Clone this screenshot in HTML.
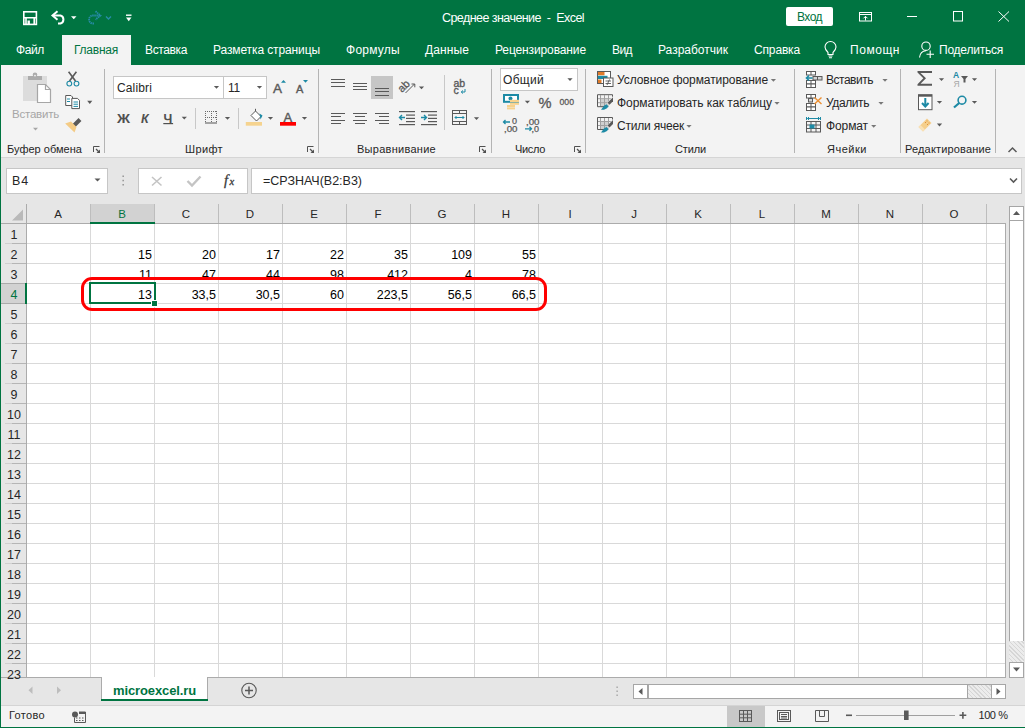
<!DOCTYPE html>
<html><head><meta charset="utf-8">
<style>
*{margin:0;padding:0;box-sizing:border-box}
html,body{width:1025px;height:728px;overflow:hidden;background:#fff;font-family:"Liberation Sans",sans-serif;position:relative}
.r{position:absolute}
.t{position:absolute;white-space:nowrap;line-height:normal}
svg text{font-family:"Liberation Sans",sans-serif}
</style></head><body>
<div class="r" style="left:0px;top:0px;width:1025px;height:65px;background:#007441"></div>
<div class="r" style="left:0px;top:65px;width:1025px;height:92px;background:#f3f3f3"></div>
<div class="r" style="left:0px;top:157px;width:1025px;height:1px;background:#d5d5d5"></div>
<div class="r" style="left:0px;top:158px;width:1025px;height:46px;background:#e6e6e6"></div>
<div class="r" style="left:0px;top:204px;width:1025px;height:474px;background:#e6e6e6"></div>
<div class="r" style="left:0px;top:677px;width:1025px;height:28px;background:#e6e6e6"></div>
<div class="r" style="left:0px;top:705px;width:1025px;height:23px;background:#f3f3f3"></div>
<div class="r" style="left:0px;top:705px;width:1025px;height:1px;background:#d4d4d4"></div>
<div class="t" id="t0" style="left:442px;top:11.08px;font-size:12.5px;color:#fff;font-weight:normal;letter-spacing:-0.556px;">Среднее значение&nbsp; -&nbsp; Excel</div>
<div class="r" style="left:786px;top:7px;width:47px;height:19px;background:#fff;border-radius:2px"></div>
<div class="t" id="t1" style="left:797px;top:9.94px;font-size:12px;color:#007441;font-weight:normal;letter-spacing:-0.539px;">Вход</div>
<div class="r" style="left:62px;top:35px;width:69px;height:30px;background:#f3f3f3"></div>
<div class="t" id="t2" style="left:16px;top:42.94px;font-size:12px;color:#fff;font-weight:normal;letter-spacing:-0.379px;">Файл</div>
<div class="t" id="t3" style="left:74px;top:42.94px;font-size:12px;color:#007441;font-weight:normal;letter-spacing:-0.241px;">Главная</div>
<div class="t" id="t4" style="left:145px;top:42.94px;font-size:12px;color:#fff;font-weight:normal;letter-spacing:-0.372px;">Вставка</div>
<div class="t" id="t5" style="left:213px;top:42.94px;font-size:12px;color:#fff;font-weight:normal;letter-spacing:-0.110px;">Разметка страницы</div>
<div class="t" id="t6" style="left:346px;top:42.94px;font-size:12px;color:#fff;font-weight:normal;letter-spacing:0.254px;">Формулы</div>
<div class="t" id="t7" style="left:425px;top:42.94px;font-size:12px;color:#fff;font-weight:normal;letter-spacing:0.107px;">Данные</div>
<div class="t" id="t8" style="left:495px;top:42.94px;font-size:12px;color:#fff;font-weight:normal;letter-spacing:-0.119px;">Рецензирование</div>
<div class="t" id="t9" style="left:612px;top:42.94px;font-size:12px;color:#fff;font-weight:normal;letter-spacing:-0.573px;">Вид</div>
<div class="t" id="t10" style="left:658px;top:42.94px;font-size:12px;color:#fff;font-weight:normal;letter-spacing:0.001px;">Разработчик</div>
<div class="t" id="t11" style="left:754px;top:42.94px;font-size:12px;color:#fff;font-weight:normal;letter-spacing:-0.154px;">Справка</div>
<div class="t" id="t12" style="left:850px;top:42.94px;font-size:12px;color:#fff;font-weight:normal;letter-spacing:0.544px;">Помощн</div>
<div class="t" id="t13" style="left:939px;top:42.94px;font-size:12px;color:#fff;font-weight:normal;letter-spacing:-0.228px;">Поделиться</div>
<div class="t" id="t14" style="left:7px;top:143.46px;font-size:11px;color:#262626;font-weight:normal;letter-spacing:0.021px;">Буфер обмена</div>
<div class="t" id="t15" style="left:185px;top:143.46px;font-size:11px;color:#262626;font-weight:normal;letter-spacing:0.359px;">Шрифт</div>
<div class="t" id="t16" style="left:357px;top:143.46px;font-size:11px;color:#262626;font-weight:normal;letter-spacing:0.273px;">Выравнивание</div>
<div class="t" id="t17" style="left:515px;top:143.46px;font-size:11px;color:#262626;font-weight:normal;letter-spacing:-0.328px;">Число</div>
<div class="t" id="t18" style="left:675px;top:143.46px;font-size:11px;color:#262626;font-weight:normal;letter-spacing:-0.141px;">Стили</div>
<div class="t" id="t19" style="left:827px;top:143.46px;font-size:11px;color:#262626;font-weight:normal;letter-spacing:0.518px;">Ячейки</div>
<div class="t" id="t20" style="left:905px;top:143.46px;font-size:11px;color:#262626;font-weight:normal;letter-spacing:0.157px;">Редактирование</div>
<div class="t" id="t21" style="left:12px;top:107.70px;font-size:11.5px;color:#a6a6a6;font-weight:normal;letter-spacing:-0.219px;">Вставить</div>
<div class="t" id="t22" style="left:617px;top:72.94px;font-size:12px;color:#262626;font-weight:normal;letter-spacing:-0.073px;">Условное форматирование</div>
<div class="t" id="t23" style="left:617px;top:95.94px;font-size:12px;color:#262626;font-weight:normal;letter-spacing:-0.046px;">Форматировать как таблицу</div>
<div class="t" id="t24" style="left:617px;top:118.94px;font-size:12px;color:#262626;font-weight:normal;letter-spacing:-0.206px;">Стили ячеек</div>
<div class="t" id="t25" style="left:826px;top:72.94px;font-size:12px;color:#262626;font-weight:normal;letter-spacing:-0.484px;">Вставить</div>
<div class="t" id="t26" style="left:826px;top:95.94px;font-size:12px;color:#262626;font-weight:normal;letter-spacing:-0.404px;">Удалить</div>
<div class="t" id="t27" style="left:826px;top:118.94px;font-size:12px;color:#262626;font-weight:normal;letter-spacing:-0.107px;">Формат</div>
<div class="r" style="left:113px;top:76px;width:111px;height:23px;background:#fff;border:1px solid #c6c6c6"></div>
<div class="r" style="left:223px;top:76px;width:44px;height:23px;background:#fff;border:1px solid #c6c6c6"></div>
<div class="t" id="t28" style="left:117px;top:80.94px;font-size:12px;color:#262626;font-weight:normal;letter-spacing:0.141px;">Calibri</div>
<div class="t" id="t29" style="left:228px;top:80.94px;font-size:12px;color:#262626;font-weight:normal;letter-spacing:-0.234px;">11</div>
<div class="r" style="left:500px;top:68px;width:78px;height:23px;background:#fff;border:1px solid #c6c6c6"></div>
<div class="t" id="t30" style="left:503px;top:72.94px;font-size:12px;color:#262626;font-weight:normal;letter-spacing:0.300px;">Общий</div>
<div class="r" style="left:104px;top:69px;width:1px;height:84px;background:#b4b4b4"></div>
<div class="r" style="left:318px;top:69px;width:1px;height:84px;background:#b4b4b4"></div>
<div class="r" style="left:491px;top:69px;width:1px;height:84px;background:#b4b4b4"></div>
<div class="r" style="left:585px;top:69px;width:1px;height:84px;background:#b4b4b4"></div>
<div class="r" style="left:794px;top:69px;width:1px;height:84px;background:#b4b4b4"></div>
<div class="r" style="left:900px;top:69px;width:1px;height:84px;background:#b4b4b4"></div>
<div class="r" style="left:995px;top:69px;width:1px;height:84px;background:#b4b4b4"></div>
<div class="r" style="left:444px;top:75px;width:1px;height:55px;background:#c8c8c8"></div>
<div class="r" style="left:195px;top:108px;width:1px;height:21px;background:#c8c8c8"></div>
<div class="r" style="left:238px;top:108px;width:1px;height:21px;background:#c8c8c8"></div>
<div class="r" style="left:371px;top:76px;width:22px;height:23px;background:#c6c6c6"></div>
<div class="r" style="left:6px;top:168px;width:102px;height:26px;background:#fff;border:1px solid #c6c6c6"></div>
<div class="t" id="t31" style="left:12px;top:174.48px;font-size:12.5px;color:#262626;font-weight:normal;letter-spacing:0.852px;">B4</div>
<div class="r" style="left:138px;top:168px;width:110px;height:26px;background:#fff;border:1px solid #c6c6c6"></div>
<div class="r" style="left:251px;top:168px;width:771px;height:26px;background:#fff;border:1px solid #c6c6c6"></div>
<div class="t" id="t32" style="left:263px;top:174.48px;font-size:12.5px;color:#262626;font-weight:normal;letter-spacing:-0.003px;">=СРЗНАЧ(B2:B3)</div>
<div class="r" style="left:26px;top:223px;width:979px;height:454px;background:#fff"></div>
<div class="r" style="left:90px;top:204px;width:64px;height:19px;background:#d2d2d2"></div>
<div class="r" style="left:1px;top:283px;width:25px;height:20px;background:#d2d2d2"></div>
<div class="r" style="left:90px;top:223px;width:1px;height:454px;background:#d9d9d9"></div><div class="r" style="left:154px;top:223px;width:1px;height:454px;background:#d9d9d9"></div><div class="r" style="left:218px;top:223px;width:1px;height:454px;background:#d9d9d9"></div><div class="r" style="left:282px;top:223px;width:1px;height:454px;background:#d9d9d9"></div><div class="r" style="left:346px;top:223px;width:1px;height:454px;background:#d9d9d9"></div><div class="r" style="left:410px;top:223px;width:1px;height:454px;background:#d9d9d9"></div><div class="r" style="left:474px;top:223px;width:1px;height:454px;background:#d9d9d9"></div><div class="r" style="left:538px;top:223px;width:1px;height:454px;background:#d9d9d9"></div><div class="r" style="left:602px;top:223px;width:1px;height:454px;background:#d9d9d9"></div><div class="r" style="left:666px;top:223px;width:1px;height:454px;background:#d9d9d9"></div><div class="r" style="left:730px;top:223px;width:1px;height:454px;background:#d9d9d9"></div><div class="r" style="left:794px;top:223px;width:1px;height:454px;background:#d9d9d9"></div><div class="r" style="left:858px;top:223px;width:1px;height:454px;background:#d9d9d9"></div><div class="r" style="left:922px;top:223px;width:1px;height:454px;background:#d9d9d9"></div><div class="r" style="left:986px;top:223px;width:1px;height:454px;background:#d9d9d9"></div><div class="r" style="left:26px;top:243px;width:979px;height:1px;background:#d9d9d9"></div><div class="r" style="left:26px;top:263px;width:979px;height:1px;background:#d9d9d9"></div><div class="r" style="left:26px;top:283px;width:979px;height:1px;background:#d9d9d9"></div><div class="r" style="left:26px;top:303px;width:979px;height:1px;background:#d9d9d9"></div><div class="r" style="left:26px;top:323px;width:979px;height:1px;background:#d9d9d9"></div><div class="r" style="left:26px;top:343px;width:979px;height:1px;background:#d9d9d9"></div><div class="r" style="left:26px;top:363px;width:979px;height:1px;background:#d9d9d9"></div><div class="r" style="left:26px;top:383px;width:979px;height:1px;background:#d9d9d9"></div><div class="r" style="left:26px;top:403px;width:979px;height:1px;background:#d9d9d9"></div><div class="r" style="left:26px;top:423px;width:979px;height:1px;background:#d9d9d9"></div><div class="r" style="left:26px;top:443px;width:979px;height:1px;background:#d9d9d9"></div><div class="r" style="left:26px;top:463px;width:979px;height:1px;background:#d9d9d9"></div><div class="r" style="left:26px;top:483px;width:979px;height:1px;background:#d9d9d9"></div><div class="r" style="left:26px;top:503px;width:979px;height:1px;background:#d9d9d9"></div><div class="r" style="left:26px;top:523px;width:979px;height:1px;background:#d9d9d9"></div><div class="r" style="left:26px;top:543px;width:979px;height:1px;background:#d9d9d9"></div><div class="r" style="left:26px;top:563px;width:979px;height:1px;background:#d9d9d9"></div><div class="r" style="left:26px;top:583px;width:979px;height:1px;background:#d9d9d9"></div><div class="r" style="left:26px;top:603px;width:979px;height:1px;background:#d9d9d9"></div><div class="r" style="left:26px;top:623px;width:979px;height:1px;background:#d9d9d9"></div><div class="r" style="left:26px;top:643px;width:979px;height:1px;background:#d9d9d9"></div><div class="r" style="left:26px;top:663px;width:979px;height:1px;background:#d9d9d9"></div>
<div class="r" style="left:26px;top:204px;width:1px;height:473px;background:#ababab"></div>
<div class="r" style="left:90px;top:204px;width:1px;height:19px;background:#bdbdbd"></div>
<div class="r" style="left:154px;top:204px;width:1px;height:19px;background:#bdbdbd"></div>
<div class="r" style="left:218px;top:204px;width:1px;height:19px;background:#bdbdbd"></div>
<div class="r" style="left:282px;top:204px;width:1px;height:19px;background:#bdbdbd"></div>
<div class="r" style="left:346px;top:204px;width:1px;height:19px;background:#bdbdbd"></div>
<div class="r" style="left:410px;top:204px;width:1px;height:19px;background:#bdbdbd"></div>
<div class="r" style="left:474px;top:204px;width:1px;height:19px;background:#bdbdbd"></div>
<div class="r" style="left:538px;top:204px;width:1px;height:19px;background:#bdbdbd"></div>
<div class="r" style="left:602px;top:204px;width:1px;height:19px;background:#bdbdbd"></div>
<div class="r" style="left:666px;top:204px;width:1px;height:19px;background:#bdbdbd"></div>
<div class="r" style="left:730px;top:204px;width:1px;height:19px;background:#bdbdbd"></div>
<div class="r" style="left:794px;top:204px;width:1px;height:19px;background:#bdbdbd"></div>
<div class="r" style="left:858px;top:204px;width:1px;height:19px;background:#bdbdbd"></div>
<div class="r" style="left:922px;top:204px;width:1px;height:19px;background:#bdbdbd"></div>
<div class="r" style="left:986px;top:204px;width:1px;height:19px;background:#bdbdbd"></div>
<div class="r" style="left:1px;top:223px;width:1005px;height:1px;background:#ababab"></div>
<div class="r" style="left:12px;top:243px;width:14px;height:1px;background:#b5b5b5"></div>
<div class="r" style="left:5px;top:243px;width:7px;height:1px;background:#d0d0d0"></div>
<div class="r" style="left:12px;top:263px;width:14px;height:1px;background:#b5b5b5"></div>
<div class="r" style="left:5px;top:263px;width:7px;height:1px;background:#d0d0d0"></div>
<div class="r" style="left:12px;top:283px;width:14px;height:1px;background:#b5b5b5"></div>
<div class="r" style="left:5px;top:283px;width:7px;height:1px;background:#d0d0d0"></div>
<div class="r" style="left:12px;top:303px;width:14px;height:1px;background:#b5b5b5"></div>
<div class="r" style="left:5px;top:303px;width:7px;height:1px;background:#d0d0d0"></div>
<div class="r" style="left:12px;top:323px;width:14px;height:1px;background:#b5b5b5"></div>
<div class="r" style="left:5px;top:323px;width:7px;height:1px;background:#d0d0d0"></div>
<div class="r" style="left:12px;top:343px;width:14px;height:1px;background:#b5b5b5"></div>
<div class="r" style="left:5px;top:343px;width:7px;height:1px;background:#d0d0d0"></div>
<div class="r" style="left:12px;top:363px;width:14px;height:1px;background:#b5b5b5"></div>
<div class="r" style="left:5px;top:363px;width:7px;height:1px;background:#d0d0d0"></div>
<div class="r" style="left:12px;top:383px;width:14px;height:1px;background:#b5b5b5"></div>
<div class="r" style="left:5px;top:383px;width:7px;height:1px;background:#d0d0d0"></div>
<div class="r" style="left:12px;top:403px;width:14px;height:1px;background:#b5b5b5"></div>
<div class="r" style="left:5px;top:403px;width:7px;height:1px;background:#d0d0d0"></div>
<div class="r" style="left:12px;top:423px;width:14px;height:1px;background:#b5b5b5"></div>
<div class="r" style="left:5px;top:423px;width:7px;height:1px;background:#d0d0d0"></div>
<div class="r" style="left:12px;top:443px;width:14px;height:1px;background:#b5b5b5"></div>
<div class="r" style="left:5px;top:443px;width:7px;height:1px;background:#d0d0d0"></div>
<div class="r" style="left:12px;top:463px;width:14px;height:1px;background:#b5b5b5"></div>
<div class="r" style="left:5px;top:463px;width:7px;height:1px;background:#d0d0d0"></div>
<div class="r" style="left:12px;top:483px;width:14px;height:1px;background:#b5b5b5"></div>
<div class="r" style="left:5px;top:483px;width:7px;height:1px;background:#d0d0d0"></div>
<div class="r" style="left:12px;top:503px;width:14px;height:1px;background:#b5b5b5"></div>
<div class="r" style="left:5px;top:503px;width:7px;height:1px;background:#d0d0d0"></div>
<div class="r" style="left:12px;top:523px;width:14px;height:1px;background:#b5b5b5"></div>
<div class="r" style="left:5px;top:523px;width:7px;height:1px;background:#d0d0d0"></div>
<div class="r" style="left:12px;top:543px;width:14px;height:1px;background:#b5b5b5"></div>
<div class="r" style="left:5px;top:543px;width:7px;height:1px;background:#d0d0d0"></div>
<div class="r" style="left:12px;top:563px;width:14px;height:1px;background:#b5b5b5"></div>
<div class="r" style="left:5px;top:563px;width:7px;height:1px;background:#d0d0d0"></div>
<div class="r" style="left:12px;top:583px;width:14px;height:1px;background:#b5b5b5"></div>
<div class="r" style="left:5px;top:583px;width:7px;height:1px;background:#d0d0d0"></div>
<div class="r" style="left:12px;top:603px;width:14px;height:1px;background:#b5b5b5"></div>
<div class="r" style="left:5px;top:603px;width:7px;height:1px;background:#d0d0d0"></div>
<div class="r" style="left:12px;top:623px;width:14px;height:1px;background:#b5b5b5"></div>
<div class="r" style="left:5px;top:623px;width:7px;height:1px;background:#d0d0d0"></div>
<div class="r" style="left:12px;top:643px;width:14px;height:1px;background:#b5b5b5"></div>
<div class="r" style="left:5px;top:643px;width:7px;height:1px;background:#d0d0d0"></div>
<div class="r" style="left:12px;top:663px;width:14px;height:1px;background:#b5b5b5"></div>
<div class="r" style="left:5px;top:663px;width:7px;height:1px;background:#d0d0d0"></div>
<div class="r" style="left:90px;top:222px;width:65px;height:2px;background:#007441"></div>
<div class="r" style="left:1px;top:283px;width:25px;height:1px;background:#ababab"></div>
<div class="r" style="left:1px;top:303px;width:25px;height:1px;background:#ababab"></div>
<div class="r" style="left:25px;top:283px;width:2px;height:21px;background:#007441"></div>
<div class="r" style="left:1005px;top:223px;width:1px;height:455px;background:#ababab"></div>
<div class="r" style="left:0px;top:677px;width:1006px;height:1px;background:#ababab"></div>
<div class="t" style="left:48px;width:20px;text-align:center;top:208.42px;font-size:11.5px;color:#262626">A</div>
<div class="t" style="left:112px;width:20px;text-align:center;top:208.42px;font-size:11.5px;color:#007441">B</div>
<div class="t" style="left:176px;width:20px;text-align:center;top:208.42px;font-size:11.5px;color:#262626">C</div>
<div class="t" style="left:240px;width:20px;text-align:center;top:208.42px;font-size:11.5px;color:#262626">D</div>
<div class="t" style="left:304px;width:20px;text-align:center;top:208.42px;font-size:11.5px;color:#262626">E</div>
<div class="t" style="left:368px;width:20px;text-align:center;top:208.42px;font-size:11.5px;color:#262626">F</div>
<div class="t" style="left:432px;width:20px;text-align:center;top:208.42px;font-size:11.5px;color:#262626">G</div>
<div class="t" style="left:496px;width:20px;text-align:center;top:208.42px;font-size:11.5px;color:#262626">H</div>
<div class="t" style="left:560px;width:20px;text-align:center;top:208.42px;font-size:11.5px;color:#262626">I</div>
<div class="t" style="left:624px;width:20px;text-align:center;top:208.42px;font-size:11.5px;color:#262626">J</div>
<div class="t" style="left:688px;width:20px;text-align:center;top:208.42px;font-size:11.5px;color:#262626">K</div>
<div class="t" style="left:752px;width:20px;text-align:center;top:208.42px;font-size:11.5px;color:#262626">L</div>
<div class="t" style="left:816px;width:20px;text-align:center;top:208.42px;font-size:11.5px;color:#262626">M</div>
<div class="t" style="left:880px;width:20px;text-align:center;top:208.42px;font-size:11.5px;color:#262626">N</div>
<div class="t" style="left:944px;width:20px;text-align:center;top:208.42px;font-size:11.5px;color:#262626">O</div>
<div class="t" style="left:1.5px;width:25px;text-align:center;top:227.50px;font-size:12.5px;color:#262626">1</div>
<div class="t" style="left:1.5px;width:25px;text-align:center;top:247.50px;font-size:12.5px;color:#262626">2</div>
<div class="t" style="left:1.5px;width:25px;text-align:center;top:267.50px;font-size:12.5px;color:#262626">3</div>
<div class="t" style="left:1.5px;width:25px;text-align:center;top:287.50px;font-size:12.5px;color:#007441">4</div>
<div class="t" style="left:1.5px;width:25px;text-align:center;top:307.50px;font-size:12.5px;color:#262626">5</div>
<div class="t" style="left:1.5px;width:25px;text-align:center;top:327.50px;font-size:12.5px;color:#262626">6</div>
<div class="t" style="left:1.5px;width:25px;text-align:center;top:347.50px;font-size:12.5px;color:#262626">7</div>
<div class="t" style="left:1.5px;width:25px;text-align:center;top:367.50px;font-size:12.5px;color:#262626">8</div>
<div class="t" style="left:1.5px;width:25px;text-align:center;top:387.50px;font-size:12.5px;color:#262626">9</div>
<div class="t" style="left:1.5px;width:25px;text-align:center;top:407.50px;font-size:12.5px;color:#262626">10</div>
<div class="t" style="left:1.5px;width:25px;text-align:center;top:427.50px;font-size:12.5px;color:#262626">11</div>
<div class="t" style="left:1.5px;width:25px;text-align:center;top:447.50px;font-size:12.5px;color:#262626">12</div>
<div class="t" style="left:1.5px;width:25px;text-align:center;top:467.50px;font-size:12.5px;color:#262626">13</div>
<div class="t" style="left:1.5px;width:25px;text-align:center;top:487.50px;font-size:12.5px;color:#262626">14</div>
<div class="t" style="left:1.5px;width:25px;text-align:center;top:507.50px;font-size:12.5px;color:#262626">15</div>
<div class="t" style="left:1.5px;width:25px;text-align:center;top:527.50px;font-size:12.5px;color:#262626">16</div>
<div class="t" style="left:1.5px;width:25px;text-align:center;top:547.50px;font-size:12.5px;color:#262626">17</div>
<div class="t" style="left:1.5px;width:25px;text-align:center;top:567.50px;font-size:12.5px;color:#262626">18</div>
<div class="t" style="left:1.5px;width:25px;text-align:center;top:587.50px;font-size:12.5px;color:#262626">19</div>
<div class="t" style="left:1.5px;width:25px;text-align:center;top:607.50px;font-size:12.5px;color:#262626">20</div>
<div class="t" style="left:1.5px;width:25px;text-align:center;top:627.50px;font-size:12.5px;color:#262626">21</div>
<div class="t" style="left:1.5px;width:25px;text-align:center;top:647.50px;font-size:12.5px;color:#262626">22</div>
<div class="t" style="left:1.5px;width:25px;text-align:center;top:667.50px;font-size:12.5px;color:#262626">23</div>
<div class="r" style="left:0;top:0;width:1005px;height:677px;overflow:hidden">
<div class="t" style="left:92px;width:60px;text-align:right;top:247.50px;font-size:12.5px;color:#000">15</div>
<div class="t" style="left:156px;width:60px;text-align:right;top:247.50px;font-size:12.5px;color:#000">20</div>
<div class="t" style="left:220px;width:60px;text-align:right;top:247.50px;font-size:12.5px;color:#000">17</div>
<div class="t" style="left:284px;width:60px;text-align:right;top:247.50px;font-size:12.5px;color:#000">22</div>
<div class="t" style="left:348px;width:60px;text-align:right;top:247.50px;font-size:12.5px;color:#000">35</div>
<div class="t" style="left:412px;width:60px;text-align:right;top:247.50px;font-size:12.5px;color:#000">109</div>
<div class="t" style="left:476px;width:60px;text-align:right;top:247.50px;font-size:12.5px;color:#000">55</div>
<div class="t" style="left:92px;width:60px;text-align:right;top:267.50px;font-size:12.5px;color:#000">11</div>
<div class="t" style="left:156px;width:60px;text-align:right;top:267.50px;font-size:12.5px;color:#000">47</div>
<div class="t" style="left:220px;width:60px;text-align:right;top:267.50px;font-size:12.5px;color:#000">44</div>
<div class="t" style="left:284px;width:60px;text-align:right;top:267.50px;font-size:12.5px;color:#000">98</div>
<div class="t" style="left:348px;width:60px;text-align:right;top:267.50px;font-size:12.5px;color:#000">412</div>
<div class="t" style="left:412px;width:60px;text-align:right;top:267.50px;font-size:12.5px;color:#000">4</div>
<div class="t" style="left:476px;width:60px;text-align:right;top:267.50px;font-size:12.5px;color:#000">78</div>
<div class="t" style="left:92px;width:60px;text-align:right;top:287.50px;font-size:12.5px;color:#000">13</div>
<div class="t" style="left:156px;width:60px;text-align:right;top:287.50px;font-size:12.5px;color:#000">33,5</div>
<div class="t" style="left:220px;width:60px;text-align:right;top:287.50px;font-size:12.5px;color:#000">30,5</div>
<div class="t" style="left:284px;width:60px;text-align:right;top:287.50px;font-size:12.5px;color:#000">60</div>
<div class="t" style="left:348px;width:60px;text-align:right;top:287.50px;font-size:12.5px;color:#000">223,5</div>
<div class="t" style="left:412px;width:60px;text-align:right;top:287.50px;font-size:12.5px;color:#000">56,5</div>
<div class="t" style="left:476px;width:60px;text-align:right;top:287.50px;font-size:12.5px;color:#000">66,5</div>
</div>
<div class="r" style="left:89px;top:282px;width:67px;height:22px;border:2px solid #007441"></div>
<div class="r" style="left:151px;top:300px;width:7px;height:7px;background:#007441;border:1px solid #fff"></div>
<div class="r" style="left:81px;top:277px;width:466px;height:34px;border:3px solid #f00;border-radius:11px"></div>
<div class="r" style="left:1009px;top:206px;width:15px;height:472px;background:#fff;border:1px solid #a6a6a6"></div>
<div class="r" style="left:1009px;top:206px;width:15px;height:15px;background:#fff;border:1px solid #a6a6a6"></div>
<div class="r" style="left:1009px;top:641px;width:15px;height:22px;background:repeating-linear-gradient(45deg,#d6d6d6 0 1px,#ececec 1px 3px)"></div>
<div class="r" style="left:1009px;top:662px;width:15px;height:16px;background:#fff;border:1px solid #a6a6a6"></div>
<div class="r" style="left:633px;top:684px;width:373px;height:15px;background:#fff;border:1px solid #a6a6a6"></div>
<div class="r" style="left:633px;top:684px;width:15px;height:15px;background:#fff;border:1px solid #a6a6a6"></div>
<div class="r" style="left:647px;top:684px;width:321px;height:15px;background:#fff;border:1px solid #a6a6a6;border-left:2px solid #a6a6a6"></div>
<div class="r" style="left:968px;top:685px;width:23px;height:13px;background:repeating-linear-gradient(45deg,#d6d6d6 0 1px,#ececec 1px 3px)"></div>
<div class="r" style="left:991px;top:684px;width:15px;height:15px;background:#fff;border:1px solid #a6a6a6"></div>
<div class="r" style="left:101px;top:677px;width:107px;height:24px;background:#fff;border-left:1px solid #ababab;border-right:1px solid #ababab"></div>
<div class="r" style="left:101px;top:699px;width:107px;height:2px;background:#007441"></div>
<div class="t" id="t33" style="left:113px;top:683.02px;font-size:13px;color:#007441;font-weight:bold;letter-spacing:-0.119px;">microexcel.ru</div>
<div class="t" id="t34" style="left:9px;top:709.06px;font-size:11px;color:#262626;font-weight:normal;letter-spacing:0.336px;">Готово</div>
<div class="t" id="t35" style="left:978.5px;top:708.86px;font-size:11px;color:#262626;font-weight:normal;letter-spacing:-0.440px;">100&nbsp;%</div>
<div class="r" style="left:727px;top:706px;width:38px;height:21px;background:#c8c8c8"></div>
<div class="r" style="left:0px;top:65px;width:1px;height:663px;background:#007441"></div>
<div class="r" style="left:0px;top:727px;width:1025px;height:1px;background:#007441"></div>
<svg class="r" style="left:0;top:0" width="1025" height="728" viewBox="0 0 1025 728"><g fill="none" stroke="#fff" stroke-width="1.6"><rect x="23.8" y="11.8" width="12.6" height="12.6"/><path d="M24 17.8H36.2M26 17.8V24.5M34.2 17.8V24.5"/></g><rect x="27.5" y="20.5" width="2.4" height="3.5" fill="#fff"/><path d="M53.5 15.5H60.5A4.2 4.2 0 0 1 60.5 23.5H58" fill="none" stroke="#fff" stroke-width="2"/><path d="M57.5 11.3L52.5 15.5L57.5 19.7" fill="none" stroke="#fff" stroke-width="2"/><path d="M71 16.3H76.5L73.75 19.2Z" fill="#fff"/><g stroke="#2e90b8" stroke-width="1.8" fill="none" stroke-dasharray="1.5 0.6" opacity="0.85"><path d="M100 15.5H92A4.2 4.2 0 0 0 92 23.5H94"/><path d="M95.5 11.3L100.5 15.5L95.5 19.7"/></g><path d="M106 16.5L108.5 19L111 16.5" stroke="#2e90b8" stroke-width="1.4" fill="none" opacity="0.85"/><rect x="126" y="14.5" width="5.5" height="1.4" fill="#fff"/><path d="M126 17.6H131.5L128.75 21.2Z" fill="#fff"/><g fill="none" stroke="#fff" stroke-width="1"><rect x="859.5" y="12.5" width="12" height="8.5"/><path d="M859.5 14.5H871.5M865.5 20.5V16.5M863.5 18.3L865.5 16.3L867.5 18.3"/><path d="M907 16.5H917"/><rect x="953.5" y="11.5" width="9" height="9.5"/><path d="M998.5 11.5L1009 21.5M1009 11.5L998.5 21.5"/></g><g fill="none" stroke="#fff" stroke-width="1.1"><path d="M828 54.5V52.5C826 50.5 825 48.5 825 47A5.5 5.5 0 0 1 836 47C836 48.5 835 50.5 833 52.5V54.5Z"/><path d="M828.5 56H832.5M829 57.8H832"/></g><g fill="none" stroke="#fff" stroke-width="1.1"><circle cx="926" cy="46.2" r="4.2"/><path d="M919.5 57.5C920 53.5 922.5 51 926 50.8"/><path d="M926.5 54.2H934M930.2 50.5V58"/></g><rect x="23" y="76" width="24" height="25" fill="#dcdcdc"/><rect x="28" y="76" width="14" height="4" fill="#ababab"/><circle cx="35" cy="74.8" r="2.3" fill="#ababab"/><circle cx="35" cy="75.6" r="0.9" fill="#f3f3f3"/><path d="M37.5 84.5H45.5L50.5 89.5V102.5H37.5Z" fill="#fff" stroke="#a6a6a6" stroke-width="1.2"/><path d="M45.5 84.5V89.5H50.5" fill="none" stroke="#a6a6a6" stroke-width="1.2"/><path d="M33 127.8H38L35.5 130.6Z" fill="#a6a6a6"/><path d="M68.6 71.7L75.5 81M76.4 71.7L69.5 81" stroke="#595959" stroke-width="1.6"/><circle cx="69.3" cy="83.6" r="2.4" fill="none" stroke="#1d8aa5" stroke-width="1.1"/><circle cx="76.5" cy="83.6" r="2.4" fill="none" stroke="#1d8aa5" stroke-width="1.1"/><path d="M65.7 95.5H71L72.5 97V105.5H65.7Z" fill="#fff" stroke="#595959" stroke-width="1"/><path d="M71.8 98.4H77.5L79.5 100.4V108.6H71.8Z" fill="#fff" stroke="#595959" stroke-width="1"/><path d="M67 99H70M67 101.5H70M73.5 102H78M73.5 104.2H78M73.5 106.4H78" stroke="#1d8aa5" stroke-width="1"/><path d="M87.2 100.7H92.3L89.75 104Z" fill="#595959"/><path d="M80 119.5L72.5 127" stroke="#595959" stroke-width="4"/><path d="M65.2 123.5L71 121.5L76.5 127L74.5 132.5Z" fill="#f4cb85"/><path d="M93.5 152V146.5H99.5" fill="none" stroke="#505050" stroke-width="1"/><path d="M100.0 149.5V153H96.5Z" fill="#505050"/><path d="M96.0 149L99.0 152" stroke="#505050" stroke-width="1.2"/><path d="M213.9 86H219.1L216.5 88.8Z" fill="#595959"/><path d="M256.9 86H262.1L259.5 88.8Z" fill="#595959"/><text x="273" y="93" font-family="Liberation Sans" font-size="13.5" fill="#595959" stroke="#595959" stroke-width="0.4">A</text><path d="M281 82.7H286L283.5 80Z" fill="#1d8aa5"/><text x="296" y="93" font-family="Liberation Sans" font-size="11" fill="#595959" stroke="#595959" stroke-width="0.4">A</text><path d="M303 80H308L305.5 82.7Z" fill="#1d8aa5"/><text x="117" y="122.5" font-family="Liberation Sans" font-weight="bold" font-size="12.5" fill="#505050" textLength="13" lengthAdjust="spacingAndGlyphs">Ж</text><text x="141" y="122.5" font-family="Liberation Sans" font-weight="bold" font-style="italic" font-size="12.5" fill="#505050">К</text><text x="163.5" y="122.5" font-family="Liberation Sans" font-weight="bold" font-size="12.5" fill="#505050">Ч</text><rect x="163.3" y="123" width="9.8" height="1.2" fill="#505050"/><path d="M181.70000000000002 116.8H186.9L184.3 119.6Z" fill="#595959"/><g fill="#6a6a6a"><rect x="205" y="111" width="1" height="1"/><rect x="205" y="117" width="1" height="1"/><rect x="207" y="111" width="1" height="1"/><rect x="207" y="117" width="1" height="1"/><rect x="209" y="111" width="1" height="1"/><rect x="209" y="117" width="1" height="1"/><rect x="211" y="111" width="1" height="1"/><rect x="211" y="117" width="1" height="1"/><rect x="213" y="111" width="1" height="1"/><rect x="213" y="117" width="1" height="1"/><rect x="215" y="111" width="1" height="1"/><rect x="215" y="117" width="1" height="1"/><rect x="205" y="111" width="1" height="1"/><rect x="211" y="111" width="1" height="1"/><rect x="216" y="111" width="1" height="1"/><rect x="205" y="113" width="1" height="1"/><rect x="211" y="113" width="1" height="1"/><rect x="216" y="113" width="1" height="1"/><rect x="205" y="115" width="1" height="1"/><rect x="211" y="115" width="1" height="1"/><rect x="216" y="115" width="1" height="1"/><rect x="205" y="117" width="1" height="1"/><rect x="211" y="117" width="1" height="1"/><rect x="216" y="117" width="1" height="1"/><rect x="205" y="119" width="1" height="1"/><rect x="211" y="119" width="1" height="1"/><rect x="216" y="119" width="1" height="1"/><rect x="205" y="121" width="1" height="1"/><rect x="211" y="121" width="1" height="1"/><rect x="216" y="121" width="1" height="1"/></g><rect x="205" y="122.5" width="12" height="1" fill="#555"/><path d="M224.9 117H230.1L227.5 119.8Z" fill="#595959"/><path d="M251 115.5L255.5 111L261 116.5L256.5 121Z" fill="#fff" stroke="#595959" stroke-width="1"/><path d="M255.5 111V108.8" stroke="#595959"/><path d="M259.5 113.5L262.5 115.5L260.5 119.5Z" fill="#1d8aa5"/><rect x="245.8" y="122" width="16.2" height="3.7" fill="#f5d38f"/><path d="M267.9 117H273.1L270.5 119.8Z" fill="#595959"/><text x="283.5" y="121.5" font-family="Liberation Sans" font-size="13" fill="#595959" stroke="#595959" stroke-width="0.4">A</text><rect x="280" y="122" width="16" height="3.7" fill="#f00"/><path d="M301.9 117H307.1L304.5 119.8Z" fill="#595959"/><path d="M307.5 152V146.5H313.5" fill="none" stroke="#505050" stroke-width="1"/><path d="M314.0 149.5V153H310.5Z" fill="#505050"/><path d="M310.0 149L313.0 152" stroke="#505050" stroke-width="1.2"/><rect x="331" y="79" width="14" height="1" fill="#595959"/><rect x="331" y="82" width="14" height="1" fill="#595959"/><rect x="331" y="86" width="14" height="1" fill="#595959"/><rect x="353" y="83" width="14" height="1" fill="#595959"/><rect x="353" y="86" width="14" height="1" fill="#595959"/><rect x="353" y="89" width="14" height="1" fill="#595959"/><rect x="375" y="88" width="14" height="1" fill="#595959"/><rect x="375" y="91" width="14" height="1" fill="#595959"/><rect x="375" y="95" width="14" height="1" fill="#595959"/><text x="0" y="0" transform="translate(402,93) rotate(-45)" font-family="Liberation Sans" font-size="11" fill="#595959" stroke="#595959" stroke-width="0.3">ab</text><path d="M405.5 93L414.5 84M411.5 84H414.8V87.3" fill="none" stroke="#595959" stroke-width="1"/><path d="M418.9 86.4H424.1L421.5 89.2Z" fill="#595959"/><text x="453.5" y="87" font-family="Liberation Sans" font-size="10.5" fill="#595959" stroke="#595959" stroke-width="0.35">ab</text><text x="453.5" y="94" font-family="Liberation Sans" font-size="10.5" fill="#595959" stroke="#595959" stroke-width="0.35">c</text><path d="M465 89V92H461.5M463 90.5L461.2 92L463 93.5" fill="none" stroke="#1d8aa5" stroke-width="1"/><rect x="331" y="113" width="14" height="1" fill="#595959"/><rect x="353.0" y="113" width="14.0" height="1" fill="#595959"/><rect x="375" y="113" width="14" height="1" fill="#595959"/><rect x="331" y="116" width="10" height="1" fill="#595959"/><rect x="355.0" y="116" width="10.0" height="1" fill="#595959"/><rect x="379" y="116" width="10" height="1" fill="#595959"/><rect x="331" y="120" width="14" height="1" fill="#595959"/><rect x="353.0" y="120" width="14.0" height="1" fill="#595959"/><rect x="375" y="120" width="14" height="1" fill="#595959"/><rect x="331" y="123" width="10" height="1" fill="#595959"/><rect x="355.0" y="123" width="10.0" height="1" fill="#595959"/><rect x="379" y="123" width="10" height="1" fill="#595959"/><g fill="#595959"><rect x="399" y="111" width="16" height="1.2"/><rect x="406" y="114.5" width="9" height="1.2"/><rect x="406" y="117.8" width="9" height="1.2"/><rect x="406" y="121" width="9" height="1.2"/><rect x="399" y="124" width="16" height="1.2"/><rect x="421" y="111" width="16" height="1.2"/><rect x="428" y="114.5" width="9" height="1.2"/><rect x="428" y="117.8" width="9" height="1.2"/><rect x="428" y="121" width="9" height="1.2"/><rect x="421" y="124" width="16" height="1.2"/></g><path d="M399.5 117.5H405M402 115L399.5 117.5L402 120" fill="none" stroke="#1d8aa5" stroke-width="1.4"/><path d="M421 117.5H426.5M424 115L426.5 117.5L424 120" fill="none" stroke="#1d8aa5" stroke-width="1.4"/><g fill="none" stroke="#595959" stroke-width="1"><rect x="452.5" y="110.5" width="14" height="14"/><path d="M452.5 113.5H466.5M452.5 121.5H466.5M459.5 110.5V113.5M459.5 121.5V124.5"/></g><path d="M455 117.5H464M456.5 116L455 117.5L456.5 119M462.5 116L464 117.5L462.5 119" fill="none" stroke="#1d8aa5" stroke-width="1"/><path d="M473.9 117.3H479.1L476.5 120.1Z" fill="#595959"/><path d="M479.5 152V146.5H485.5" fill="none" stroke="#505050" stroke-width="1"/><path d="M486.0 149.5V153H482.5Z" fill="#505050"/><path d="M482.0 149L485.0 152" stroke="#505050" stroke-width="1.2"/><path d="M567.4 78.3H572.6L570 81.1Z" fill="#595959"/><rect x="503" y="94" width="16" height="8.8" fill="#1d8aa5"/><rect x="505" y="96" width="12" height="4.8" fill="#fff"/><circle cx="510.5" cy="98.4" r="2" fill="#1d8aa5"/><g fill="#f7d28c"><rect x="510" y="99.8" width="9" height="2.2"/><rect x="510" y="102.6" width="9" height="2.2"/><rect x="507" y="105" width="8" height="2"/><rect x="507" y="107.4" width="8" height="2"/></g><path d="M524.8 100.8H530.0L527.4 103.6Z" fill="#595959"/><text x="538.5" y="108" font-family="Liberation Sans" font-size="15" fill="#595959" stroke="#595959" stroke-width="0.35" textLength="13" lengthAdjust="spacingAndGlyphs">%</text><text x="559.5" y="104.8" font-family="Liberation Sans" font-size="9.5" fill="#595959" stroke="#595959" stroke-width="0.3" textLength="14.5" lengthAdjust="spacingAndGlyphs">000</text><text x="512" y="123.5" font-family="Liberation Sans" font-size="9" fill="#595959" stroke="#595959" stroke-width="0.25">0</text><text x="504" y="132" font-family="Liberation Sans" font-size="9" fill="#595959" stroke="#595959" stroke-width="0.25" textLength="13.5" lengthAdjust="spacingAndGlyphs">,00</text><path d="M503.5 122H510M505.5 120L503.5 122L505.5 124" fill="none" stroke="#1d8aa5" stroke-width="1.3"/><text x="526" y="124.5" font-family="Liberation Sans" font-size="9" fill="#595959" stroke="#595959" stroke-width="0.25" textLength="13.5" lengthAdjust="spacingAndGlyphs">,00</text><text x="531.5" y="132" font-family="Liberation Sans" font-size="9" fill="#595959" stroke="#595959" stroke-width="0.25">,0</text><path d="M525 128.8H531.5M529.5 126.8L531.5 128.8L529.5 130.8" fill="none" stroke="#1d8aa5" stroke-width="1.3"/><path d="M574.5 152V146.5H580.5" fill="none" stroke="#505050" stroke-width="1"/><path d="M581.0 149.5V153H577.5Z" fill="#505050"/><path d="M577.0 149L580.0 152" stroke="#505050" stroke-width="1.2"/><rect x="597.5" y="71.5" width="13" height="12" fill="#fff" stroke="#595959" stroke-width="1"/><rect x="598" y="72" width="6.5" height="3.3" fill="#e07b2a"/><rect x="598" y="75.8" width="9.5" height="3.2" fill="#1d8aa5"/><rect x="598" y="79.5" width="3.5" height="3.5" fill="#e07b2a"/><rect x="603.5" y="78" width="9.5" height="8.5" fill="#fff" stroke="#595959" stroke-width="1"/><path d="M605.5 81H611M605.5 83.5H611M609.5 79.5L607 85" stroke="#595959" stroke-width="0.9"/><rect x="601" y="99.2" width="8" height="8" fill="#d0d0d0"/><g stroke="#a0a0a0" stroke-width="1"><path d="M600.5 95.2V106.7M604.5 95.2V106.7M608.5 95.2V102.2M598 98.7H612M598 102.7H610"/></g><path d="M604.5 106.7H597.5V94.7H612.5V96.7" fill="none" stroke="#595959" stroke-width="1"/><path d="M609 104.7L614 98.7" stroke="#f3f3f3" stroke-width="5"/><path d="M613 97.2V101.2L609.5 104.7L607.5 102.7Z" fill="#595959"/><path d="M601 109.7L604 105.7L606.5 104.2L608.5 106.2L607 108.2L604 109.7Z" fill="#1d8aa5"/><rect x="601" y="122" width="8" height="8" fill="#d0d0d0"/><g stroke="#a0a0a0" stroke-width="1"><path d="M600.5 118V129.5M604.5 118V129.5M608.5 118V125M598 121.5H612M598 125.5H610"/></g><path d="M604.5 129.5H597.5V117.5H612.5V119.5" fill="none" stroke="#595959" stroke-width="1"/><path d="M609 127.5L614 121.5" stroke="#f3f3f3" stroke-width="5"/><path d="M613 120V124L609.5 127.5L607.5 125.5Z" fill="#595959"/><path d="M601 132.5L604 128.5L606.5 127L608.5 129L607 131L604 132.5Z" fill="#1d8aa5"/><path d="M770.8 79H776.0L773.4 81.8Z" fill="#777"/><path d="M774.4 102H779.6L777 104.8Z" fill="#777"/><path d="M686.4 125H691.6L689 127.8Z" fill="#777"/><rect x="806.5" y="71.5" width="9" height="3.5" fill="#fff" stroke="#595959" stroke-width="1"/><path d="M811.0 71.5V75.0" stroke="#595959" stroke-width="1"/><rect x="806.5" y="80.5" width="9" height="3.5" fill="#fff" stroke="#595959" stroke-width="1"/><path d="M811.0 80.5V84.0" stroke="#595959" stroke-width="1"/><rect x="806.5" y="84.0" width="9" height="3.5" fill="#fff" stroke="#595959" stroke-width="1"/><path d="M811.0 84.0V87.5" stroke="#595959" stroke-width="1"/><rect x="813.0" y="76.5" width="9" height="3.5" fill="#d4d4d4" stroke="#595959" stroke-width="1"/><path d="M817.5 76.5V80.0" stroke="#595959" stroke-width="1"/><path d="M806.5 78H812.5M809 75.5L806.5 78L809 80.5" fill="none" stroke="#1d8aa5" stroke-width="1.6"/><rect x="806.5" y="94.5" width="9" height="3.5" fill="#fff" stroke="#595959" stroke-width="1"/><path d="M811.0 94.5V98.0" stroke="#595959" stroke-width="1"/><rect x="806.5" y="103.5" width="9" height="3.5" fill="#fff" stroke="#595959" stroke-width="1"/><path d="M811.0 103.5V107.0" stroke="#595959" stroke-width="1"/><rect x="806.5" y="107.0" width="9" height="3.5" fill="#fff" stroke="#595959" stroke-width="1"/><path d="M811.0 107.0V110.5" stroke="#595959" stroke-width="1"/><rect x="808.5" y="98.5" width="4" height="3.5" fill="#d4d4d4" stroke="#595959" stroke-width="1"/><path d="M814.5 97.5L821.5 104M821.5 97.5L814.5 104" stroke="#ec8f31" stroke-width="1.4"/><g fill="none" stroke="#595959" stroke-width="1"><rect x="806.5" y="121.5" width="14" height="10.5"/><path d="M806.5 125H820.5M806.5 128.5H820.5M811 121.5V132M816 121.5V132"/></g><rect x="809.5" y="124.5" width="5" height="4" fill="#1d8aa5"/><path d="M807.5 118.5H819.5M809 117L807.5 118.5L809 120M818 117L819.5 118.5L818 120M806.5 117V120M820.5 117V120" fill="none" stroke="#1d8aa5" stroke-width="1"/><path d="M882.4 79H887.6L885 81.8Z" fill="#777"/><path d="M878.4 102H883.6L881 104.8Z" fill="#777"/><path d="M871.1 125H876.3000000000001L873.7 127.8Z" fill="#777"/><path d="M917.5 71H932V73H920.5L926 78.3L920.5 83.8H932V85.8H917.5V84.3L923.3 78.3L917.5 72.5Z" fill="#595959"/><path d="M938.9 78.3H944.1L941.5 81.1Z" fill="#595959"/><text x="953" y="77.8" font-family="Liberation Sans" font-weight="bold" font-size="8.5" fill="#1d8aa5">A</text><text x="953.5" y="86.5" font-family="Liberation Sans" font-size="8.5" fill="#a6a6a6">Я</text><path d="M961 76H968L965.5 79V82.5H963.5V79Z" fill="#595959"/><path d="M971.9 78.3H977.1L974.5 81.1Z" fill="#595959"/><rect x="918.5" y="94.7" width="13.5" height="15" fill="#fff" stroke="#595959" stroke-width="1"/><rect x="918.5" y="94.7" width="13.5" height="2" fill="#595959"/><path d="M925.3 98V106M922 103L925.3 106.5L928.6 103" fill="none" stroke="#1d8aa5" stroke-width="2"/><path d="M936.9 101H942.1L939.5 103.8Z" fill="#595959"/><circle cx="962" cy="100.2" r="3.9" fill="none" stroke="#1d8aa5" stroke-width="1.6"/><path d="M959.2 103L954 107.5" stroke="#1d8aa5" stroke-width="2.2"/><path d="M971.9 101H977.1L974.5 103.8Z" fill="#595959"/><path d="M918.5 127L927 118.5L931.5 123L923 131.5Z" fill="#f5cf8c"/><path d="M918.5 127L920.5 125L925 129.5L923 131.5Z" fill="#f9e2b8"/><g fill="#e0903a"><rect x="925" y="122" width="1" height="1"/><rect x="927" y="124" width="1" height="1"/><rect x="926.5" y="120.5" width="1" height="1"/><rect x="928.5" y="122.5" width="1" height="1"/></g><path d="M936.9 123.6H942.1L939.5 126.39999999999999Z" fill="#595959"/><path d="M1008.5 152L1012.5 148L1016.5 152" fill="none" stroke="#595959" stroke-width="1.5"/><path d="M94.5 178.5H100.5L97.5 181.5Z" fill="#595959"/><g fill="#888"><rect x="122.5" y="175.5" width="1.3" height="1.5"/><rect x="122.5" y="179.8" width="1.3" height="1.5"/><rect x="122.5" y="184" width="1.3" height="1.5"/></g><path d="M152 177L161.5 185.5M161.5 177L152 185.5" stroke="#c4c4c4" stroke-width="1.6"/><path d="M187.5 181L192 185.5L200.5 176.5" fill="none" stroke="#c4c4c4" stroke-width="2.4"/><text x="224" y="185" style="font-family:Liberation Serif" font-style="italic" font-size="14.5" fill="#3a3a3a" stroke="#3a3a3a" stroke-width="0.3">f</text><text x="229.5" y="185" style="font-family:Liberation Serif" font-style="italic" font-size="10.5" fill="#3a3a3a" stroke="#3a3a3a" stroke-width="0.3">x</text><path d="M1010 178.5L1013.5 182L1017 178.5" fill="none" stroke="#595959" stroke-width="1.6"/><path d="M23 209.5V220.5H12Z" fill="#b9b9b9"/><path d="M1013 215H1020L1016.5 211Z" fill="#595959"/><path d="M1013 667.5H1020L1016.5 671.5Z" fill="#595959"/><path d="M642.5 688V695L638.5 691.5Z" fill="#595959"/><path d="M996.5 688V695L1000.5 691.5Z" fill="#595959"/><g fill="#999"><rect x="616.5" y="686.5" width="1.2" height="1.5"/><rect x="616.5" y="690.5" width="1.2" height="1.5"/><rect x="616.5" y="694.5" width="1.2" height="1.5"/></g><path d="M32.5 686.5V694L28.5 690.25Z" fill="#bdbdbd"/><path d="M57 686.5V694L61 690.25Z" fill="#bdbdbd"/><circle cx="249" cy="690.5" r="7.2" fill="none" stroke="#595959" stroke-width="1.1"/><path d="M245 690.5H253M249 686.5V694.5" stroke="#595959" stroke-width="1.5"/><circle cx="75" cy="714.5" r="3" fill="#595959"/><rect x="74" y="711.5" width="12" height="11" fill="none" stroke="#595959" stroke-width="0" /><path d="M79 712H85.5V722.5H74.5V717.5" fill="none" stroke="#595959" stroke-width="1"/><rect x="79" y="712" width="6.5" height="2" fill="#595959"/><g fill="#595959"><rect x="76" y="717.5" width="1.5" height="1"/><rect x="79" y="717.5" width="1.5" height="1"/><rect x="82" y="717.5" width="1.5" height="1"/><rect x="76" y="720" width="1.5" height="1"/><rect x="79" y="720" width="1.5" height="1"/><rect x="82" y="720" width="1.5" height="1"/></g><g fill="none" stroke="#595959" stroke-width="1"><rect x="739.5" y="710.5" width="12" height="11"/><path d="M739.5 714.2H751.5M739.5 717.8H751.5M743.5 710.5V721.5M747.5 710.5V721.5"/><rect x="777.5" y="710.5" width="13" height="11"/><rect x="779.5" y="712.5" width="9" height="7"/><path d="M781 714.5H787M781 716.5H787M781 718H787"/><path d="M815.5 710.5H828.5V721.5H815.5Z"/><path d="M819.5 710.5V716.5H824.5V710.5"/></g><rect x="846" y="714.5" width="6" height="1.6" fill="#595959"/><rect x="856" y="715" width="99" height="1" fill="#a0a0a0"/><rect x="904" y="710.5" width="4.6" height="9.5" fill="#595959"/><path d="M959.5 715.3H966.3M962.9 711.9V718.7" stroke="#595959" stroke-width="1.6"/></svg>
</body></html>
